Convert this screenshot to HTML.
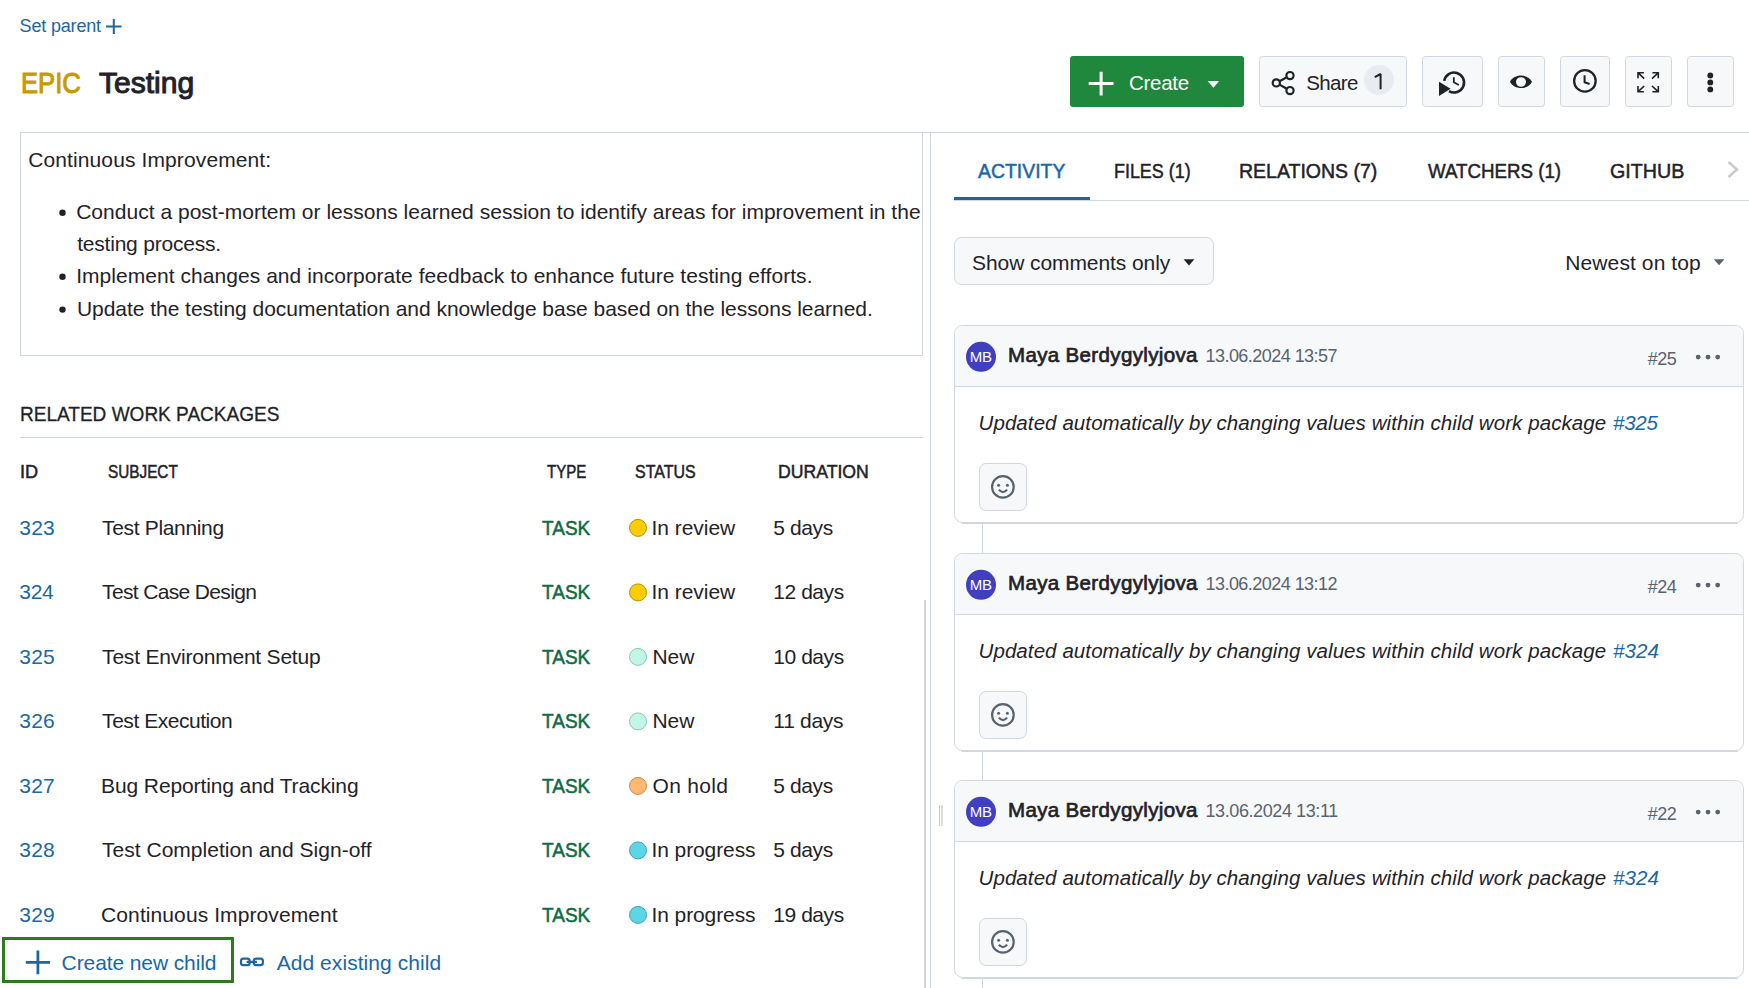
<!DOCTYPE html>
<html><head><meta charset="utf-8"><title>Testing</title>
<style>
html,body{margin:0;padding:0;background:#fff;width:1749px;height:988px;overflow:hidden;position:relative;font-family:"Liberation Sans",sans-serif}
.t{position:absolute;white-space:nowrap;font-family:"Liberation Sans",sans-serif;transform-origin:0 0}
.a{position:absolute;box-sizing:border-box}
svg{position:absolute;overflow:visible}
</style></head><body>
<svg width="1749" height="988" viewBox="0 0 1749 988" style="left:0;top:0"><path d="M106 26.5H121.5M113.8 18.9V34" stroke="#1a67a3" stroke-width="2" fill="none"/>
<rect x="1070" y="56" width="174" height="51" rx="3" fill="#1f883d"/>
<path d="M1088.7 83.6H1113.5M1101.1 71.8V95.5" stroke="#fff" stroke-width="3" fill="none"/>
<path d="M1207.6 81.1H1219.2L1213.4 87.7Z" fill="#fff"/>
<rect x="1259.5" y="56.5" width="147" height="50" rx="3" fill="#f6f8fa" stroke="#d0d7de"/>
<g stroke="#1f2328" stroke-width="2.2" fill="none"><circle cx="1290" cy="75.6" r="3.6"/><circle cx="1276.3" cy="82.9" r="3.6"/><circle cx="1290" cy="90.6" r="3.6"/><path d="M1279.5 81.2L1286.8 77.3M1279.5 84.6L1286.8 88.8"/></g>
<circle cx="1379" cy="79.9" r="15" fill="#e8ebef"/>
<path d="M1374.8 77.2L1380.6 74V89.3" stroke="#1f2328" stroke-width="2" fill="none" stroke-linejoin="bevel"/>
<rect x="1422.5" y="56.5" width="60" height="50" rx="3" fill="#f6f8fa" stroke="#d0d7de"/>
<rect x="1498.5" y="56.5" width="46" height="50" rx="3" fill="#f6f8fa" stroke="#d0d7de"/>
<rect x="1560.5" y="56.5" width="49" height="50" rx="3" fill="#f6f8fa" stroke="#d0d7de"/>
<rect x="1625.5" y="56.5" width="46" height="50" rx="3" fill="#f6f8fa" stroke="#d0d7de"/>
<rect x="1687.5" y="56.5" width="46" height="50" rx="3" fill="#f6f8fa" stroke="#d0d7de"/>
<path d="M1444.2 80.9A10 10 0 1 1 1449 91.1" stroke="#1f2328" stroke-width="2.6" fill="none"/>
<path d="M1439 81.8L1439 95.9L1450.6 88.8Z" fill="#1f2328"/>
<path d="M1453.8 77.3V82.2L1458.8 85" stroke="#1f2328" stroke-width="1.8" fill="none"/>
<path fill-rule="evenodd" d="M1510 81.85C1514 73.5 1528 73.5 1532 81.85C1528 90.2 1514 90.2 1510 81.85ZM1516 82A5 4.8 0 1 0 1526 82A5 4.8 0 1 0 1516 82Z" fill="#1f2328"/>
<circle cx="1584.9" cy="80.9" r="10.75" stroke="#1f2328" stroke-width="2.3" fill="none"/>
<path d="M1584.6 75.2V82.2L1589.6 84" stroke="#1f2328" stroke-width="2" fill="none"/>
<g stroke="#1f2328" stroke-width="1.6" fill="none"><path d="M1638 78.3V72.7H1643.9M1638.4 73.1L1644.2 78.6"/><path d="M1658.3 78.3V72.7H1652.4M1657.9 73.1L1652 78.6"/><path d="M1638 86.1V91.8H1643.9M1638.4 91.4L1644.2 86"/><path d="M1658.3 86.1V91.8H1652.4M1657.9 91.4L1652 86"/></g>
<g fill="#1f2328"><circle cx="1710.3" cy="75.4" r="2.9"/><circle cx="1710.3" cy="82.4" r="2.9"/><circle cx="1710.3" cy="89.4" r="2.9"/></g>
<rect x="20.5" y="132.5" width="902" height="223" fill="none" stroke="#d0d7de"/>
<rect x="923" y="132" width="826" height="1" fill="#d0d7de"/>
<circle cx="62.5" cy="212.8" r="3.2" fill="#1f2328"/>
<circle cx="62.5" cy="276.7" r="3.2" fill="#1f2328"/>
<circle cx="62.5" cy="309.6" r="3.2" fill="#1f2328"/>
<rect x="20" y="437" width="903" height="1" fill="#d0d7de"/>
<circle cx="638" cy="527.9" r="8.5" fill="#ffcc00" stroke="#b39200" stroke-width="1"/>
<circle cx="638" cy="592.4" r="8.5" fill="#ffcc00" stroke="#b39200" stroke-width="1"/>
<circle cx="638" cy="656.9" r="8.5" fill="#c1f5e6" stroke="#89c9b5" stroke-width="1"/>
<circle cx="638" cy="721.4" r="8.5" fill="#c1f5e6" stroke="#89c9b5" stroke-width="1"/>
<circle cx="638" cy="785.9" r="8.5" fill="#ffb870" stroke="#d08a45" stroke-width="1"/>
<circle cx="638" cy="850.4" r="8.5" fill="#5cd6e6" stroke="#3aa8b5" stroke-width="1"/>
<circle cx="638" cy="914.9" r="8.5" fill="#5cd6e6" stroke="#3aa8b5" stroke-width="1"/>
<rect x="3.5" y="938.5" width="229" height="43" fill="none" stroke="#2e7a1e" stroke-width="3"/>
<path d="M25.8 962.3H50M37.9 950.5V974.2" stroke="#1a67a3" stroke-width="2.8" fill="none"/>
<g stroke="#1a67a3" stroke-width="2.2" fill="none"><rect x="241" y="958.7" width="8.7" height="6.4" rx="2.4"/><rect x="253.8" y="958.7" width="9.1" height="6.4" rx="2.4"/><path d="M246.7 961.9H256.9"/></g>
<rect x="930" y="132" width="1" height="856" fill="#d0d7de"/>
<rect x="924" y="600" width="2" height="388" fill="#d6d6d6"/>
<rect x="939" y="805" width="1" height="21" fill="#c6c6c6"/>
<rect x="941" y="805" width="2" height="21" fill="#dcdcdc"/>
<rect x="954" y="200" width="795" height="1" fill="#d0d7de"/>
<rect x="954" y="197" width="136" height="3" fill="#1a67a3"/>
<path d="M1728.5 162L1737 169.5L1728.5 177" stroke="#c9c9c9" stroke-width="2.4" fill="none"/>
<rect x="954.5" y="237.5" width="259" height="47" rx="7" fill="#f6f8fa" stroke="#d0d7de"/>
<path d="M1183.6 259.3H1194.4L1189 265.5Z" fill="#1f2328"/>
<path d="M1713.8 259.3H1724.4L1719.1 265.2Z" fill="#59636e"/>
<rect x="954.5" y="325.5" width="789" height="197" rx="8" fill="#fff" stroke="#d0d7de"/>
<path d="M955 386V333A7.5 7.5 0 0 1 962.5 326H1735.5A7.5 7.5 0 0 1 1743 333.5V386Z" fill="#f6f8fa"/>
<rect x="954" y="386" width="790" height="1" fill="#d0d7de"/>
<rect x="961" y="523" width="777" height="1" fill="#d0d7de"/>
<circle cx="981" cy="356.8" r="15" fill="#3f3fbf"/>
<g fill="#59636e"><circle cx="1698.2" cy="357.1" r="2.4"/><circle cx="1708" cy="357.1" r="2.4"/><circle cx="1717.7" cy="357.1" r="2.4"/></g>
<rect x="979.5" y="463.5" width="47" height="47" rx="6.5" fill="#f6f8fa" stroke="#d0d7de"/>
<g stroke="#59636e" stroke-width="2.2" fill="none"><circle cx="1002.9" cy="486.9" r="10.8"/><path d="M998.9 489.6Q1003 494.6 1007.1 489.6" stroke-width="2.2"/></g>
<g fill="#59636e"><circle cx="998.6" cy="485.3" r="1.5"/><circle cx="1007.4" cy="485.3" r="1.5"/></g>
<rect x="954.5" y="553.5" width="789" height="197" rx="8" fill="#fff" stroke="#d0d7de"/>
<path d="M955 614V561A7.5 7.5 0 0 1 962.5 554H1735.5A7.5 7.5 0 0 1 1743 561.5V614Z" fill="#f6f8fa"/>
<rect x="954" y="614" width="790" height="1" fill="#d0d7de"/>
<rect x="961" y="751" width="777" height="1" fill="#d0d7de"/>
<circle cx="981" cy="584.8" r="15" fill="#3f3fbf"/>
<g fill="#59636e"><circle cx="1698.2" cy="585.1" r="2.4"/><circle cx="1708" cy="585.1" r="2.4"/><circle cx="1717.7" cy="585.1" r="2.4"/></g>
<rect x="979.5" y="691.5" width="47" height="47" rx="6.5" fill="#f6f8fa" stroke="#d0d7de"/>
<g stroke="#59636e" stroke-width="2.2" fill="none"><circle cx="1002.9" cy="714.9" r="10.8"/><path d="M998.9 717.6Q1003 722.6 1007.1 717.6" stroke-width="2.2"/></g>
<g fill="#59636e"><circle cx="998.6" cy="713.3" r="1.5"/><circle cx="1007.4" cy="713.3" r="1.5"/></g>
<rect x="954.5" y="780.5" width="789" height="197" rx="8" fill="#fff" stroke="#d0d7de"/>
<path d="M955 841V788A7.5 7.5 0 0 1 962.5 781H1735.5A7.5 7.5 0 0 1 1743 788.5V841Z" fill="#f6f8fa"/>
<rect x="954" y="841" width="790" height="1" fill="#d0d7de"/>
<rect x="961" y="978" width="777" height="1" fill="#d0d7de"/>
<circle cx="981" cy="811.8" r="15" fill="#3f3fbf"/>
<g fill="#59636e"><circle cx="1698.2" cy="812.1" r="2.4"/><circle cx="1708" cy="812.1" r="2.4"/><circle cx="1717.7" cy="812.1" r="2.4"/></g>
<rect x="979.5" y="918.5" width="47" height="47" rx="6.5" fill="#f6f8fa" stroke="#d0d7de"/>
<g stroke="#59636e" stroke-width="2.2" fill="none"><circle cx="1002.9" cy="941.9" r="10.8"/><path d="M998.9 944.6Q1003 949.6 1007.1 944.6" stroke-width="2.2"/></g>
<g fill="#59636e"><circle cx="998.6" cy="940.3" r="1.5"/><circle cx="1007.4" cy="940.3" r="1.5"/></g>
<rect x="982" y="523" width="1" height="30" fill="#d0d7de"/>
<rect x="982" y="751" width="1" height="29" fill="#d0d7de"/>
<rect x="982" y="978" width="1" height="10" fill="#d0d7de"/></svg>
<div class="t" style="left:19.60px;top:17.00px;font-size:18px;line-height:18px;color:#1a67a3;letter-spacing:-0.178px">Set parent</div>
<div class="t" style="left:21.03px;top:68.70px;font-size:29px;line-height:29px;color:#c69a05;transform:scaleX(0.8846);-webkit-text-stroke:1px currentColor">EPIC</div>
<div class="t" style="left:99.20px;top:68.70px;font-size:29px;line-height:29px;color:#1f2328;transform:scaleX(1.0363);-webkit-text-stroke:1px currentColor">Testing</div>
<div class="t" style="left:1129.00px;top:72.60px;font-size:20.5px;line-height:20.5px;color:#ffffff;letter-spacing:-0.280px">Create</div>
<div class="t" style="left:1306.20px;top:72.70px;font-size:20.5px;line-height:20.5px;color:#1f2328;letter-spacing:-0.600px">Share</div>
<div class="t" style="left:28.20px;top:149.10px;font-size:21px;line-height:21px;color:#1f2328;letter-spacing:0.114px">Continuous Improvement:</div>
<div class="t" style="left:76.20px;top:201.00px;font-size:21px;line-height:21px;color:#1f2328;letter-spacing:0.019px">Conduct a post-mortem or lessons learned session to identify areas for improvement in the</div>
<div class="t" style="left:77.20px;top:233.20px;font-size:21px;line-height:21px;color:#1f2328;letter-spacing:-0.213px">testing process.</div>
<div class="t" style="left:76.20px;top:264.90px;font-size:21px;line-height:21px;color:#1f2328;letter-spacing:0.047px">Implement changes and incorporate feedback to enhance future testing efforts.</div>
<div class="t" style="left:76.90px;top:297.80px;font-size:21px;line-height:21px;color:#1f2328;letter-spacing:-0.033px">Update the testing documentation and knowledge base based on the lessons learned.</div>
<div class="t" style="left:19.89px;top:403.00px;font-size:21px;line-height:21px;color:#1f2328;transform:scaleX(0.9060);-webkit-text-stroke:0.3px currentColor">RELATED WORK PACKAGES</div>
<div class="t" style="left:19.76px;top:463.90px;font-size:17.5px;line-height:17.5px;color:#1f2328;transform:scaleX(1.0375);-webkit-text-stroke:0.5px currentColor">ID</div>
<div class="t" style="left:107.50px;top:463.90px;font-size:17.5px;line-height:17.5px;color:#1f2328;transform:scaleX(0.8750);-webkit-text-stroke:0.5px currentColor">SUBJECT</div>
<div class="t" style="left:547.20px;top:463.90px;font-size:17.5px;line-height:17.5px;color:#1f2328;transform:scaleX(0.8587);-webkit-text-stroke:0.5px currentColor">TYPE</div>
<div class="t" style="left:634.50px;top:463.90px;font-size:17.5px;line-height:17.5px;color:#1f2328;transform:scaleX(0.9121);-webkit-text-stroke:0.5px currentColor">STATUS</div>
<div class="t" style="left:778.29px;top:463.90px;font-size:17.5px;line-height:17.5px;color:#1f2328;transform:scaleX(1.0080);-webkit-text-stroke:0.5px currentColor">DURATION</div>
<div class="t" style="left:19.30px;top:516.90px;font-size:21px;line-height:21px;color:#1a67a3;letter-spacing:0.200px">323</div>
<div class="t" style="left:102.10px;top:516.90px;font-size:21px;line-height:21px;color:#1f2328;letter-spacing:-0.342px">Test Planning</div>
<div class="t" style="left:541.90px;top:516.90px;font-size:21px;line-height:21px;color:#0b6b45;transform:scaleX(0.9057);-webkit-text-stroke:0.5px currentColor">TASK</div>
<div class="t" style="left:651.50px;top:516.90px;font-size:21px;line-height:21px;color:#1f2328;letter-spacing:-0.037px">In review</div>
<div class="t" style="left:773.30px;top:516.90px;font-size:21px;line-height:21px;color:#1f2328;letter-spacing:-0.400px">5 days</div>
<div class="t" style="left:19.30px;top:581.40px;font-size:21px;line-height:21px;color:#1a67a3;letter-spacing:-0.300px">324</div>
<div class="t" style="left:102.10px;top:581.40px;font-size:21px;line-height:21px;color:#1f2328;letter-spacing:-0.653px">Test Case Design</div>
<div class="t" style="left:541.90px;top:581.40px;font-size:21px;line-height:21px;color:#0b6b45;transform:scaleX(0.9057);-webkit-text-stroke:0.5px currentColor">TASK</div>
<div class="t" style="left:651.50px;top:581.40px;font-size:21px;line-height:21px;color:#1f2328;letter-spacing:-0.037px">In review</div>
<div class="t" style="left:773.30px;top:581.40px;font-size:21px;line-height:21px;color:#1f2328;letter-spacing:-0.450px">12 days</div>
<div class="t" style="left:19.30px;top:645.90px;font-size:21px;line-height:21px;color:#1a67a3;letter-spacing:0.200px">325</div>
<div class="t" style="left:102.10px;top:645.90px;font-size:21px;line-height:21px;color:#1f2328;letter-spacing:-0.210px">Test Environment Setup</div>
<div class="t" style="left:541.90px;top:645.90px;font-size:21px;line-height:21px;color:#0b6b45;transform:scaleX(0.9057);-webkit-text-stroke:0.5px currentColor">TASK</div>
<div class="t" style="left:652.50px;top:645.90px;font-size:21px;line-height:21px;color:#1f2328;letter-spacing:-0.100px">New</div>
<div class="t" style="left:773.30px;top:645.90px;font-size:21px;line-height:21px;color:#1f2328;letter-spacing:-0.450px">10 days</div>
<div class="t" style="left:19.30px;top:710.40px;font-size:21px;line-height:21px;color:#1a67a3;letter-spacing:0.200px">326</div>
<div class="t" style="left:102.10px;top:710.40px;font-size:21px;line-height:21px;color:#1f2328;letter-spacing:-0.462px">Test Execution</div>
<div class="t" style="left:541.90px;top:710.40px;font-size:21px;line-height:21px;color:#0b6b45;transform:scaleX(0.9057);-webkit-text-stroke:0.5px currentColor">TASK</div>
<div class="t" style="left:652.50px;top:710.40px;font-size:21px;line-height:21px;color:#1f2328;letter-spacing:-0.100px">New</div>
<div class="t" style="left:773.30px;top:710.40px;font-size:21px;line-height:21px;color:#1f2328;letter-spacing:-0.283px">11 days</div>
<div class="t" style="left:19.30px;top:774.90px;font-size:21px;line-height:21px;color:#1a67a3;letter-spacing:0.200px">327</div>
<div class="t" style="left:101.10px;top:774.90px;font-size:21px;line-height:21px;color:#1f2328;letter-spacing:-0.112px">Bug Reporting and Tracking</div>
<div class="t" style="left:541.90px;top:774.90px;font-size:21px;line-height:21px;color:#0b6b45;transform:scaleX(0.9057);-webkit-text-stroke:0.5px currentColor">TASK</div>
<div class="t" style="left:652.50px;top:774.90px;font-size:21px;line-height:21px;color:#1f2328;letter-spacing:0.333px">On hold</div>
<div class="t" style="left:773.30px;top:774.90px;font-size:21px;line-height:21px;color:#1f2328;letter-spacing:-0.400px">5 days</div>
<div class="t" style="left:19.30px;top:839.40px;font-size:21px;line-height:21px;color:#1a67a3;letter-spacing:0.200px">328</div>
<div class="t" style="left:102.10px;top:839.40px;font-size:21px;line-height:21px;color:#1f2328;letter-spacing:0.011px">Test Completion and Sign-off</div>
<div class="t" style="left:541.90px;top:839.40px;font-size:21px;line-height:21px;color:#0b6b45;transform:scaleX(0.9057);-webkit-text-stroke:0.5px currentColor">TASK</div>
<div class="t" style="left:651.50px;top:839.40px;font-size:21px;line-height:21px;color:#1f2328;letter-spacing:-0.100px">In progress</div>
<div class="t" style="left:773.30px;top:839.40px;font-size:21px;line-height:21px;color:#1f2328;letter-spacing:-0.400px">5 days</div>
<div class="t" style="left:19.30px;top:903.90px;font-size:21px;line-height:21px;color:#1a67a3;letter-spacing:0.200px">329</div>
<div class="t" style="left:101.10px;top:903.90px;font-size:21px;line-height:21px;color:#1f2328;letter-spacing:0.090px">Continuous Improvement</div>
<div class="t" style="left:541.90px;top:903.90px;font-size:21px;line-height:21px;color:#0b6b45;transform:scaleX(0.9057);-webkit-text-stroke:0.5px currentColor">TASK</div>
<div class="t" style="left:651.50px;top:903.90px;font-size:21px;line-height:21px;color:#1f2328;letter-spacing:-0.100px">In progress</div>
<div class="t" style="left:773.30px;top:903.90px;font-size:21px;line-height:21px;color:#1f2328;letter-spacing:-0.450px">19 days</div>
<div class="t" style="left:61.60px;top:952.30px;font-size:21px;line-height:21px;color:#1a67a3;letter-spacing:-0.100px">Create new child</div>
<div class="t" style="left:276.70px;top:952.30px;font-size:21px;line-height:21px;color:#1a67a3;letter-spacing:0.059px">Add existing child</div>
<div class="t" style="left:978.10px;top:160.70px;font-size:20.5px;line-height:20.5px;color:#1a67a3;transform:scaleX(0.9467);-webkit-text-stroke:0.5px currentColor">ACTIVITY</div>
<div class="t" style="left:1114.13px;top:160.70px;font-size:20.5px;line-height:20.5px;color:#1f2328;transform:scaleX(0.8733);-webkit-text-stroke:0.5px currentColor">FILES (1)</div>
<div class="t" style="left:1239.45px;top:160.70px;font-size:20.5px;line-height:20.5px;color:#1f2328;transform:scaleX(0.9514);-webkit-text-stroke:0.5px currentColor">RELATIONS (7)</div>
<div class="t" style="left:1427.60px;top:160.70px;font-size:20.5px;line-height:20.5px;color:#1f2328;transform:scaleX(0.9131);-webkit-text-stroke:0.5px currentColor">WATCHERS (1)</div>
<div class="t" style="left:1610.00px;top:160.70px;font-size:20.5px;line-height:20.5px;color:#1f2328;transform:scaleX(0.9610);-webkit-text-stroke:0.5px currentColor">GITHUB</div>
<div class="t" style="left:972.00px;top:251.70px;font-size:21px;line-height:21px;color:#1f2328;letter-spacing:-0.076px">Show comments only</div>
<div class="t" style="left:1565.30px;top:251.50px;font-size:21px;line-height:21px;color:#1f2328;letter-spacing:0.100px">Newest on top</div>
<div class="t" style="left:969.80px;top:348.80px;font-size:15px;line-height:15px;color:#ffffff;letter-spacing:-0.200px">MB</div>
<div class="t" style="left:1008.00px;top:344.90px;font-size:20.5px;line-height:20.5px;color:#1f2328;letter-spacing:0.353px;-webkit-text-stroke:0.7px currentColor">Maya Berdygylyjova</div>
<div class="t" style="left:1205.50px;top:346.90px;font-size:18px;line-height:18px;color:#59636e;letter-spacing:-0.540px">13.06.2024 13:57</div>
<div class="t" style="left:1647.70px;top:350.00px;font-size:18px;line-height:18px;color:#59636e;letter-spacing:-0.450px">#25</div>
<div class="t" style="left:978.50px;top:413.30px;font-size:20.5px;line-height:20.5px;color:#1f2328;letter-spacing:0.085px;font-style:italic">Updated automatically by changing values within child work package</div>
<div class="t" style="left:1613.00px;top:413.30px;font-size:20.5px;line-height:20.5px;color:#1a67a3;letter-spacing:-0.233px;font-style:italic">#325</div>
<div class="t" style="left:969.80px;top:576.80px;font-size:15px;line-height:15px;color:#ffffff;letter-spacing:-0.200px">MB</div>
<div class="t" style="left:1008.00px;top:572.90px;font-size:20.5px;line-height:20.5px;color:#1f2328;letter-spacing:0.353px;-webkit-text-stroke:0.7px currentColor">Maya Berdygylyjova</div>
<div class="t" style="left:1205.50px;top:574.90px;font-size:18px;line-height:18px;color:#59636e;letter-spacing:-0.540px">13.06.2024 13:12</div>
<div class="t" style="left:1647.70px;top:578.00px;font-size:18px;line-height:18px;color:#59636e;letter-spacing:-0.450px">#24</div>
<div class="t" style="left:978.50px;top:641.30px;font-size:20.5px;line-height:20.5px;color:#1f2328;letter-spacing:0.085px;font-style:italic">Updated automatically by changing values within child work package</div>
<div class="t" style="left:1613.00px;top:641.30px;font-size:20.5px;line-height:20.5px;color:#1a67a3;letter-spacing:0.100px;font-style:italic">#324</div>
<div class="t" style="left:969.80px;top:803.80px;font-size:15px;line-height:15px;color:#ffffff;letter-spacing:-0.200px">MB</div>
<div class="t" style="left:1008.00px;top:799.90px;font-size:20.5px;line-height:20.5px;color:#1f2328;letter-spacing:0.353px;-webkit-text-stroke:0.7px currentColor">Maya Berdygylyjova</div>
<div class="t" style="left:1205.50px;top:801.90px;font-size:18px;line-height:18px;color:#59636e;letter-spacing:-0.407px">13.06.2024 13:11</div>
<div class="t" style="left:1647.70px;top:805.00px;font-size:18px;line-height:18px;color:#59636e;letter-spacing:-0.450px">#22</div>
<div class="t" style="left:978.50px;top:868.30px;font-size:20.5px;line-height:20.5px;color:#1f2328;letter-spacing:0.085px;font-style:italic">Updated automatically by changing values within child work package</div>
<div class="t" style="left:1613.00px;top:868.30px;font-size:20.5px;line-height:20.5px;color:#1a67a3;letter-spacing:0.100px;font-style:italic">#324</div>
</body></html>
